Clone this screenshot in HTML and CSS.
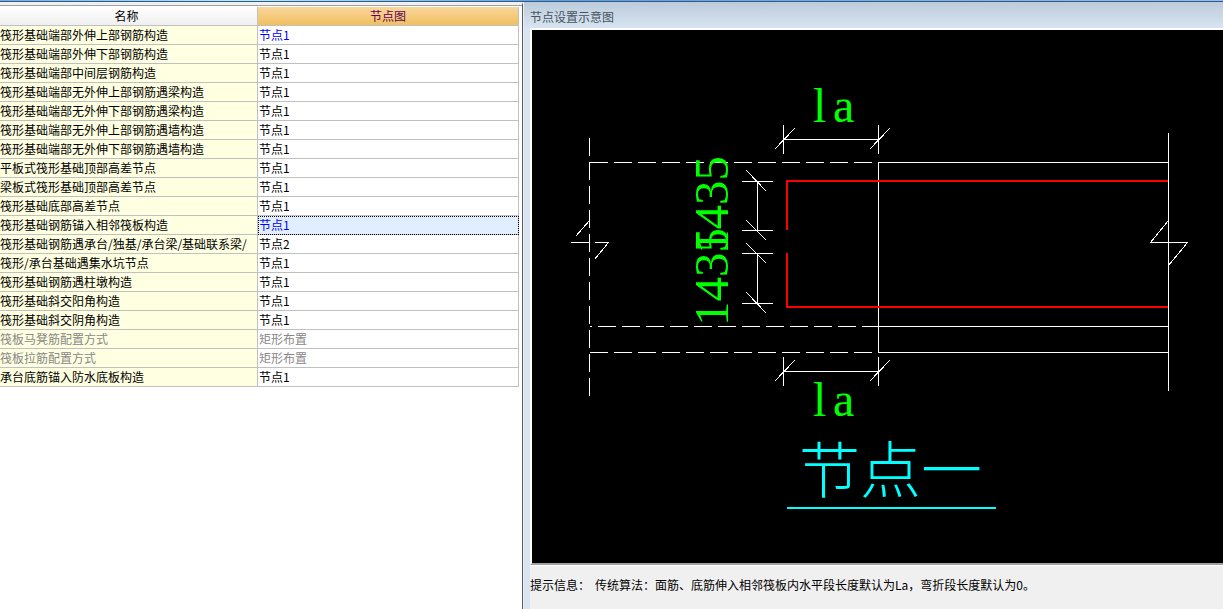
FILE: index.html
```html
<!DOCTYPE html>
<html lang="zh-CN">
<head>
<meta charset="utf-8">
<title>节点设置</title>
<link rel="stylesheet" href="styles.css">
</head>
<body>
<div class="top-strip"></div>
<main class="workspace">
  <section class="list-pane">
    <table class="node-table">
      <thead>
        <tr><th class="name-col" scope="col">名称</th><th class="node-col active" scope="col">节点图</th></tr>
      </thead>
      <tbody>
        <tr><td>筏形基础端部外伸上部钢筋构造</td><td class="changed">节点1</td></tr>
        <tr><td>筏形基础端部外伸下部钢筋构造</td><td>节点1</td></tr>
        <tr><td>筏形基础端部中间层钢筋构造</td><td>节点1</td></tr>
        <tr><td>筏形基础端部无外伸上部钢筋遇梁构造</td><td>节点1</td></tr>
        <tr><td>筏形基础端部无外伸下部钢筋遇梁构造</td><td>节点1</td></tr>
        <tr><td>筏形基础端部无外伸上部钢筋遇墙构造</td><td>节点1</td></tr>
        <tr><td>筏形基础端部无外伸下部钢筋遇墙构造</td><td>节点1</td></tr>
        <tr><td>平板式筏形基础顶部高差节点</td><td>节点1</td></tr>
        <tr><td>梁板式筏形基础顶部高差节点</td><td>节点1</td></tr>
        <tr><td>筏形基础底部高差节点</td><td>节点1</td></tr>
        <tr><td>筏形基础钢筋锚入相邻筏板构造</td><td class="changed selected">节点1</td></tr>
        <tr><td>筏形基础钢筋遇承台/独基/承台梁/基础联系梁/</td><td>节点2</td></tr>
        <tr><td>筏形/承台基础遇集水坑节点</td><td>节点1</td></tr>
        <tr><td>筏形基础钢筋遇柱墩构造</td><td>节点1</td></tr>
        <tr><td>筏形基础斜交阳角构造</td><td>节点1</td></tr>
        <tr><td>筏形基础斜交阴角构造</td><td>节点1</td></tr>
        <tr class="disabled"><td>筏板马凳筋配置方式</td><td>矩形布置</td></tr>
        <tr class="disabled"><td>筏板拉筋配置方式</td><td>矩形布置</td></tr>
        <tr><td>承台底筋锚入防水底板构造</td><td>节点1</td></tr>
      </tbody>
    </table>
  </section>
  <section class="preview-pane">
    <h2 class="preview-title">节点设置示意图</h2>
    <div class="preview-body">
      <div class="canvas">
        <svg class="drawing" viewBox="532 30 691 533" role="img" aria-label="节点一">
          <g class="line" transform="translate(.5 .5)">
            <path class="dash" d="M589 137V395"/>
            <path class="dash" d="M589 162H878"/>
            <path class="dash shifted" d="M589 326H878"/>
            <path class="dash" d="M589 352H878"/>
            <path d="M878 162H1168M878 326H1168M878 352H1168M878 162V352M1168 132V390"/>
            <path d="M1168 220L1150 242H1187L1168 265"/>
            <path d="M589 220L575 236M570 242H588M594 242H608L594 259"/>
            <path d="M783 124V153M878 124V153M783 139H878M774 149L794 128M869 149L889 128"/>
            <path d="M783 356V385M878 356V385M783 371H878M774 381L794 360M869 381L889 360"/>
            <path d="M741 181H772M741 230H772M757 181V230M746 170L766 191M746 220L766 240"/>
            <path d="M741 253H772M741 303H772M757 253V303M746 243L766 263M746 292L766 313"/>
          </g>
          <path class="rebar" d="M1168 181H787V230M787 253V307H1168"/>
          <g class="dim-text">
            <text x="813" y="122">l<tspan x="833">a</tspan></text>
            <text x="813" y="416">l<tspan x="833">a</tspan></text>
            <text class="rotated" transform="translate(728 254) rotate(-90)">1435</text>
            <text class="rotated" transform="translate(728 326) rotate(-90)">1435</text>
          </g>
          <text class="caption" x="799" y="493">节点一</text>
          <path class="underline" d="M787 508H996"/>
        </svg>
      </div>
      <p class="hint"><span>提示信息：</span><span>传统算法：面筋、底筋伸入相邻筏板内水平段长度默认为La，弯折段长度默认为0。</span></p>
    </div>
  </section>
</main>
</body>
</html>
```
FILE: styles.css
```css
* {
  box-sizing: border-box;
}

body {
  margin: 0;
  min-height: 100vh;
  display: flex;
  flex-direction: column;
  background: #fff;
  color: #000;
  font: 12px/18px "Noto Sans CJK SC", sans-serif;
}

.top-strip {
  height: 2px;
  background: linear-gradient(90deg, #6fb0dc, #b9eef8 20%, #5f9fd4 45%, #8fc0e6);
  border-bottom: 1px solid #35598c;
}

.workspace {
  flex: 1;
  display: grid;
  grid-template-columns: 523fr 700fr;
}

.list-pane {
  min-width: 0;
  padding-right: 3px;
  border-top: 3px solid #f0f0f0;
  border-right: 1px solid #5a5a5a;
  background: linear-gradient(#a0a0a0, #a0a0a0) 0 0 / 100% 1px no-repeat;
  padding-top: 2px;
}

.node-table {
  width: 100%;
  table-layout: fixed;
  border-collapse: separate;
  border-spacing: 0;
}

.node-table th,
.node-table td {
  height: 19px;
  padding: 0;
  border-right: 1px solid #c0c0c0;
  border-bottom: 1px solid #c0c0c0;
  overflow: hidden;
  white-space: nowrap;
  font-weight: 400;
  text-align: left;
}

.node-table th {
  text-align: center;
  background: linear-gradient(#fff, #efefef);
}

.node-table .name-col {
  width: 49.7%;
  padding-right: 4px;
}

.node-table th.active {
  color: #600060;
  background: linear-gradient(#f9d69c, #f0bf5e);
}

.node-table td:first-child {
  background: #ffffe1;
}

.node-table td:last-child {
  padding-left: 1px;
}

.node-table .changed {
  color: #00f;
}

.node-table .selected {
  background: #e0eeff;
  outline: 1px dotted #000;
  outline-offset: -1px;
}

.node-table .disabled {
  color: #888;
}

.preview-pane {
  min-width: 0;
  display: flex;
  flex-direction: column;
  padding-left: 6px;
  background: linear-gradient(#bccbda, #d8e4f2 26px);
  border-left: 1px solid #e8f0f8;
}

.preview-title {
  margin: 0;
  padding-top: 6px;
  height: 26px;
  font-size: 12px;
  line-height: 18px;
  font-weight: 400;
  color: #465360;
}

.preview-body {
  flex: 1;
  display: flex;
  flex-direction: column;
  background: #f0f0f0;
}

.canvas {
  background: #000;
  border-top: 2px solid #fff;
  border-left: 2px solid #fff;
  border-bottom: 2px solid #a0a0a0;
}

.drawing {
  display: block;
  width: 100%;
}

.line {
  fill: none;
  stroke: #fff;
  shape-rendering: crispEdges;
}

.dash {
  stroke-dasharray: 18 6;
}

.shifted {
  stroke-dashoffset: 16;
}

.rebar {
  fill: none;
  stroke: #f00;
  stroke-width: 2;
  shape-rendering: crispEdges;
}

.dim-text {
  fill: #0f0;
  font: 48px "Liberation Serif", serif;
}

.rotated {
  font-size: 49px;
}

.caption {
  fill: #0ff;
  font-size: 61px;
  font-weight: 300;
}

.underline {
  stroke: #0ff;
  stroke-width: 2;
  shape-rendering: crispEdges;
}

.hint {
  flex: 1;
  display: flex;
  gap: 5px;
  margin: 0;
  padding: 10px 0 0;
  border-top: 1px solid #fff;
}
```
